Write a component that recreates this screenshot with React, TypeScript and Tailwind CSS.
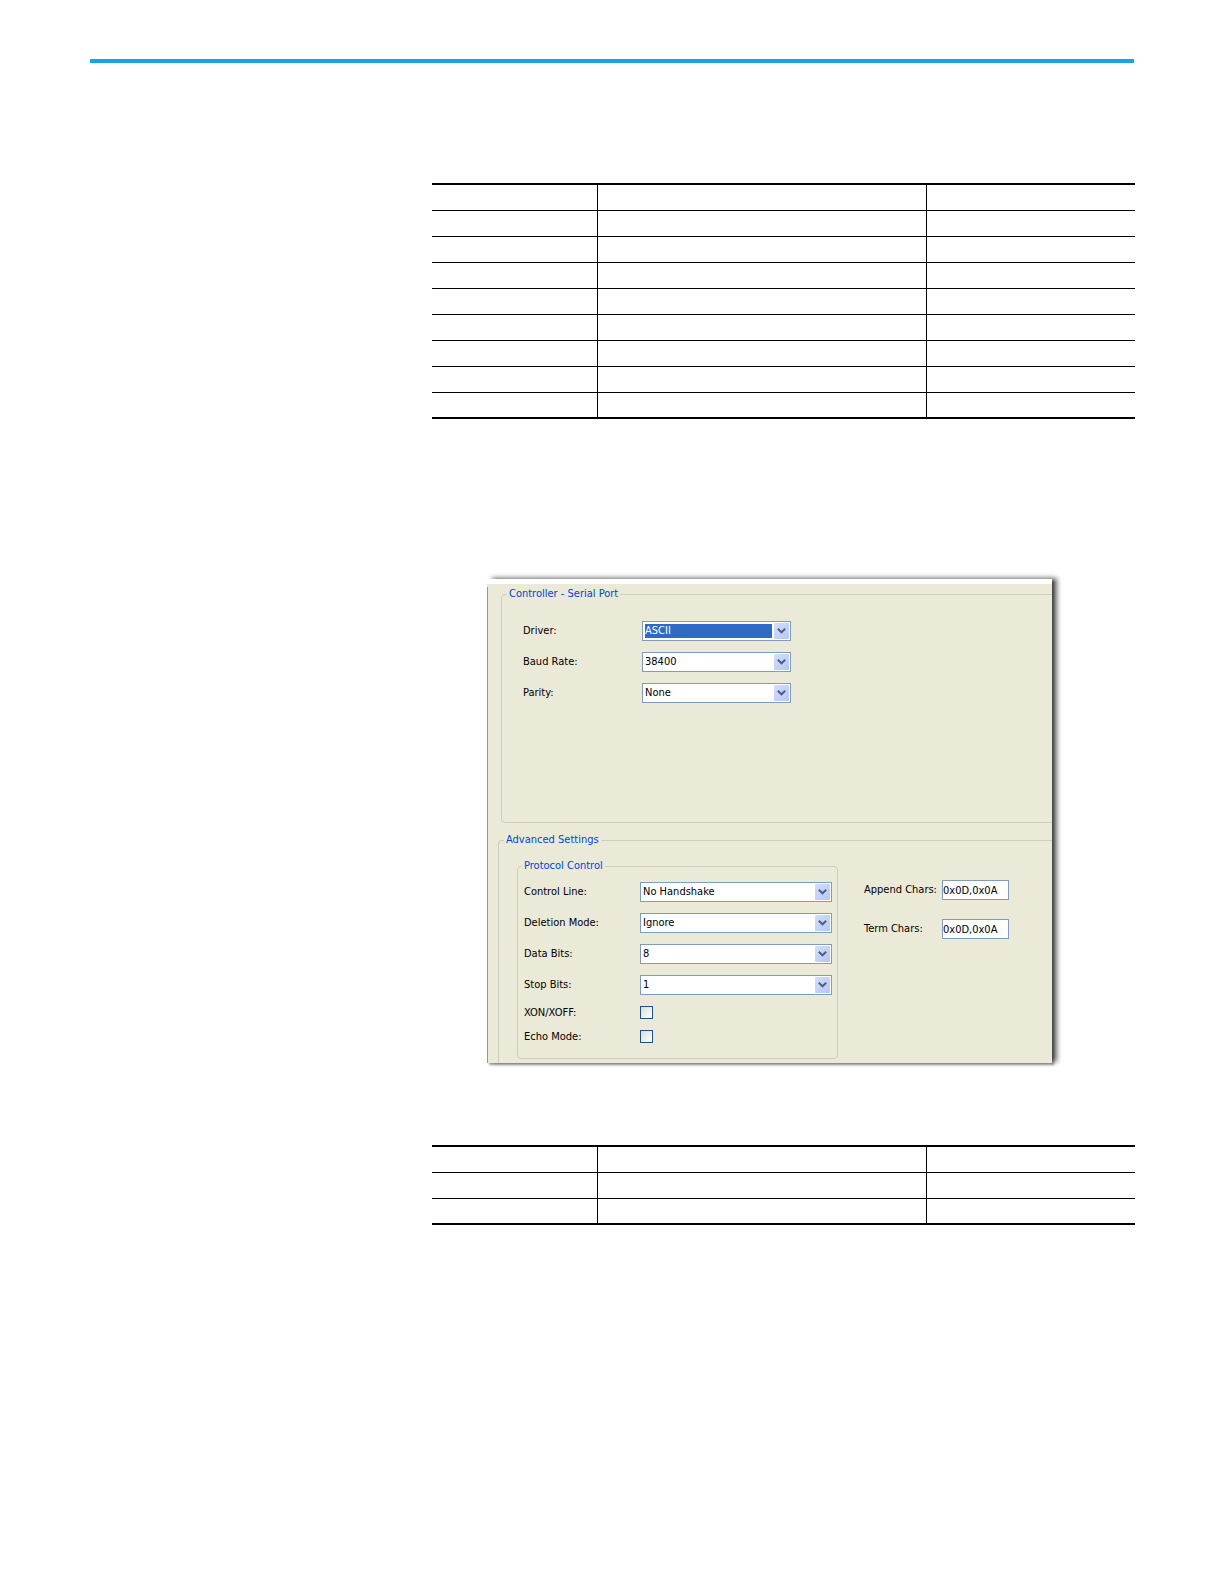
import React, { useState } from 'react';

// Ruled table with empty cells
const RuledTable = ({ rows, label }: { rows: number; label: string }) => (
  <table aria-label={label} className="w-full table-fixed border-separate border-spacing-0 border-t-2 border-black">
    <colgroup>
      <col className="w-[166px]" />
      <col className="w-[329px]" />
      <col />
    </colgroup>
    <tbody>
      {Array.from({ length: rows }, (_, i) => {
        const line = i === rows - 1 ? 'border-b-2' : 'border-b';
        return (
          <tr key={i} className="h-[26px]">
            <td className={`${line} border-r border-black p-0`} />
            <td className={`${line} border-r border-black p-0`} />
            <td className={`${line} border-black p-0`} />
          </tr>
        );
      })}
    </tbody>
  </table>
);

interface SelectFieldProps {
  id: string;
  label: string;
  options: string[];
  labelWidth: string;
  width: string;
  active?: boolean;
}

const SelectField: React.FC<SelectFieldProps> = ({ id, label, options, labelWidth, width, active }) => (
  <div className="flex h-5 items-center">
    <label htmlFor={id} className={labelWidth}>
      {label}
    </label>
    <div className={`relative h-5 border border-[#7f9db9] bg-white p-[2px] ${width}`}>
      <select
        id={id}
        className={`block h-[14px] w-[calc(100%-16px)] appearance-none leading-[14px] outline-none ${
          active ? 'bg-[#316ac5] text-white' : 'bg-white text-black'
        }`}
      >
        {options.map((o) => (
          <option key={o}>{o}</option>
        ))}
      </select>
      <span className="pointer-events-none absolute top-px right-px flex h-4 w-[15px] items-center justify-center rounded-[1px] bg-linear-to-br from-[#d3defb] to-[#b5c7f5]">
        <svg width="9" height="6" viewBox="0 0 9 6" fill="none" stroke="#4d6185" strokeWidth="2">
          <path d="M0.8 0.8 4.5 4.3 8.2 0.8" />
        </svg>
      </span>
    </div>
  </div>
);

const CheckField = ({ id, label }: { id: string; label: string }) => (
  <div className="flex h-[13px] items-center">
    <label htmlFor={id} className="w-[116px]">
      {label}
    </label>
    <input
      id={id}
      type="checkbox"
      className="size-[13px] appearance-none border border-[#1d5281] bg-linear-to-br from-[#dcdcd7] to-white checked:bg-[#21a121]"
    />
  </div>
);

const CharsField = ({ id, label, initial }: { id: string; label: string; initial: string }) => {
  const [value, setValue] = useState(initial);
  return (
    <div className="flex h-5 items-center">
      <label htmlFor={id} className="w-[78px]">
        {label}
      </label>
      <input
        id={id}
        type="text"
        value={value}
        onChange={(e) => setValue(e.target.value)}
        className="h-5 w-[67px] border border-[#7f9db9] bg-white outline-none"
      />
    </div>
  );
};

const SerialPortPanel = () => (
  <section className="w-[565px] overflow-hidden border-t-[5px] border-white bg-[#ebe9d8] pt-2 text-[11px] leading-[14px] text-black">
    <div className="border-l border-[#7f9db9]">
      <fieldset className="-mt-[5px] -mr-2 ml-[13px] h-[236px] rounded border border-[#cfcebd] px-[21px] pt-5">
        <legend className="-ml-4 px-[2px] text-[#0046d5]">Controller - Serial Port</legend>
        <div className="flex flex-col gap-[11px]">
          <SelectField id="driver" label="Driver:" options={['ASCII', 'CIP Serial', 'Modbus RTU']} labelWidth="w-[119px]" width="w-[149px]" active />
          <SelectField id="baud" label="Baud Rate:" options={['38400', '19200', '9600']} labelWidth="w-[119px]" width="w-[149px]" />
          <SelectField id="parity" label="Parity:" options={['None', 'Even', 'Odd']} labelWidth="w-[119px]" width="w-[149px]" />
        </div>
      </fieldset>

      <fieldset className="mt-2.5 -mr-2 ml-[10px] rounded-tl border border-b-0 border-[#cfcebd] pl-[18px]">
        <legend className="-ml-[13px] px-[2px] text-[#0046d5]">Advanced Settings</legend>
        <div className="flex items-start pt-3 pb-1">
          <fieldset className="w-[321px] rounded border border-[#cfcebd] pb-[15px] pl-[6px]">
            <legend className="-ml-0.5 px-[2px] text-[#0046d5]">Protocol Control</legend>
            <div className="flex flex-col gap-[11px] pt-[9px]">
              <SelectField id="control" label="Control Line:" options={['No Handshake', 'Full Duplex']} labelWidth="w-[116px]" width="w-[192px]" />
              <SelectField id="deletion" label="Deletion Mode:" options={['Ignore', 'CRT', 'Printer']} labelWidth="w-[116px]" width="w-[192px]" />
              <SelectField id="data" label="Data Bits:" options={['8', '7']} labelWidth="w-[116px]" width="w-[192px]" />
              <SelectField id="stop" label="Stop Bits:" options={['1', '2']} labelWidth="w-[116px]" width="w-[192px]" />
              <CheckField id="xon" label="XON/XOFF:" />
              <CheckField id="echo" label="Echo Mode:" />
            </div>
          </fieldset>
          <div className="flex flex-col gap-[19px] pt-[21px] pl-[26px]">
            <CharsField id="append" label="Append Chars:" initial="0x0D,0x0A" />
            <CharsField id="term" label="Term Chars:" initial="0x0D,0x0A" />
          </div>
        </div>
      </fieldset>
    </div>
  </section>
);

export default function App() {
  return (
    <div className="min-h-screen bg-white pt-[59px] pr-[89px] pl-[90px] font-['DejaVu_Sans_Condensed','DejaVu_Sans',sans-serif]">
      <header className="mr-px h-1 bg-[#17a4dc]" />
      <main className="pt-[120px] pl-[342px]">
        <RuledTable rows={9} label="Serial port parameters" />
        <div className="mt-40 mb-[82px] ml-[55px] w-fit shadow-[5px_-1px_5px_rgba(0,0,0,0.6),2px_2px_2px_rgba(0,0,0,0.35)]">
          <SerialPortPanel />
        </div>
        <RuledTable rows={3} label="Advanced parameters" />
      </main>
    </div>
  );
}
